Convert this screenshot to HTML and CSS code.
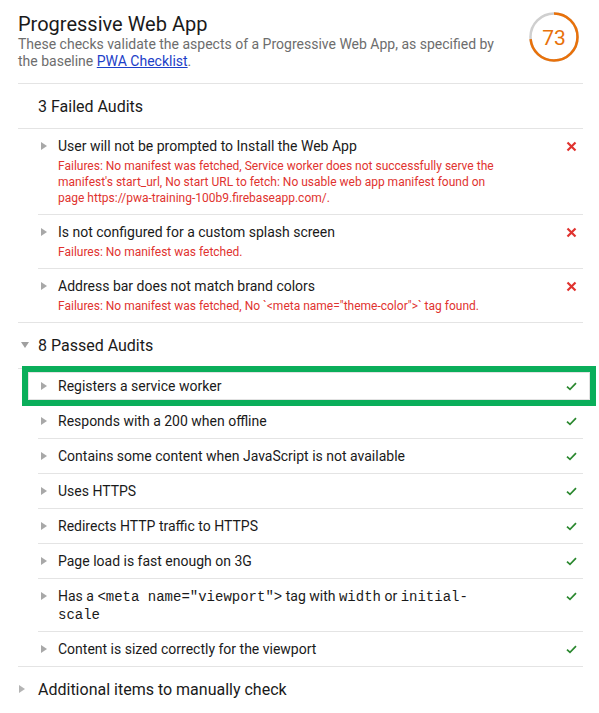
FILE: index.html
```html
<!DOCTYPE html>
<html>
<head>
<meta charset="utf-8">
<link rel="stylesheet" href="styles.css">
</head>
<body>
<div class="report">
  <header class="cat-header">
    <div class="cat-text">
      <h1 class="cat-title">Progressive Web App</h1>
      <p class="cat-desc">These checks validate the aspects of a Progressive Web App, as specified by the baseline <a href="#" class="link">PWA Checklist</a>.</p>
    </div>
    <div class="gauge">
      <svg width="54" height="54" viewBox="0 0 54 54">
        <circle cx="27" cy="27" r="23.5" fill="none" stroke="#cfcfcf" stroke-width="2.5"/>
        <circle cx="27" cy="27" r="23.5" fill="none" stroke="#e8710a" stroke-width="2.5" stroke-dasharray="107.8 200" transform="rotate(-90 27 27)"/>
        <text x="27" y="34.5" text-anchor="middle" class="gauge-num">73</text>
      </svg>
    </div>
  </header>

  <section class="group">
    <div class="group-header"><span class="arrow-slot"></span><span>3 Failed Audits</span></div>
    <div class="rows">
      <div class="row">
        <span class="arrow-slot"><span class="tri-right"></span></span>
        <div class="row-text">
          <div class="row-title">User will not be prompted to Install the Web App</div>
          <div class="row-desc">Failures: No manifest was fetched, Service worker does not successfully serve the manifest's start_url, No start URL to fetch: No usable web app manifest found on page https://pwa-training-100b9.firebaseapp.com/.</div>
        </div>
        <span class="icon"><svg width="11" height="11" viewBox="0 0 11 11"><path d="M1.5 1.5L9.5 9.5M9.5 1.5L1.5 9.5" stroke="#e0332f" stroke-width="2.2" fill="none"/></svg></span>
      </div>
      <div class="row">
        <span class="arrow-slot"><span class="tri-right"></span></span>
        <div class="row-text">
          <div class="row-title">Is not configured for a custom splash screen</div>
          <div class="row-desc">Failures: No manifest was fetched.</div>
        </div>
        <span class="icon"><svg width="11" height="11" viewBox="0 0 11 11"><path d="M1.5 1.5L9.5 9.5M9.5 1.5L1.5 9.5" stroke="#e0332f" stroke-width="2.2" fill="none"/></svg></span>
      </div>
      <div class="row">
        <span class="arrow-slot"><span class="tri-right"></span></span>
        <div class="row-text">
          <div class="row-title">Address bar does not match brand colors</div>
          <div class="row-desc">Failures: No manifest was fetched, No `&lt;meta name="theme-color"&gt;` tag found.</div>
        </div>
        <span class="icon"><svg width="11" height="11" viewBox="0 0 11 11"><path d="M1.5 1.5L9.5 9.5M9.5 1.5L1.5 9.5" stroke="#e0332f" stroke-width="2.2" fill="none"/></svg></span>
      </div>
    </div>
  </section>

  <section class="group">
    <div class="group-header tall"><span class="arrow-slot"><span class="tri-down"></span></span><span>8 Passed Audits</span></div>
    <div class="rows">
      <div class="row highlight">
        <span class="arrow-slot"><span class="tri-right"></span></span>
        <div class="row-text"><div class="row-title">Registers a service worker</div></div>
        <span class="icon"><svg width="11" height="9" viewBox="0 0 11 9"><path d="M1 4.6L4 7.4L10 1.2" stroke="#2b882f" stroke-width="1.7" fill="none"/></svg></span>
      </div>
      <div class="row">
        <span class="arrow-slot"><span class="tri-right"></span></span>
        <div class="row-text"><div class="row-title">Responds with a 200 when offline</div></div>
        <span class="icon"><svg width="11" height="9" viewBox="0 0 11 9"><path d="M1 4.6L4 7.4L10 1.2" stroke="#2b882f" stroke-width="1.7" fill="none"/></svg></span>
      </div>
      <div class="row">
        <span class="arrow-slot"><span class="tri-right"></span></span>
        <div class="row-text"><div class="row-title">Contains some content when JavaScript is not available</div></div>
        <span class="icon"><svg width="11" height="9" viewBox="0 0 11 9"><path d="M1 4.6L4 7.4L10 1.2" stroke="#2b882f" stroke-width="1.7" fill="none"/></svg></span>
      </div>
      <div class="row">
        <span class="arrow-slot"><span class="tri-right"></span></span>
        <div class="row-text"><div class="row-title">Uses HTTPS</div></div>
        <span class="icon"><svg width="11" height="9" viewBox="0 0 11 9"><path d="M1 4.6L4 7.4L10 1.2" stroke="#2b882f" stroke-width="1.7" fill="none"/></svg></span>
      </div>
      <div class="row">
        <span class="arrow-slot"><span class="tri-right"></span></span>
        <div class="row-text"><div class="row-title">Redirects HTTP traffic to HTTPS</div></div>
        <span class="icon"><svg width="11" height="9" viewBox="0 0 11 9"><path d="M1 4.6L4 7.4L10 1.2" stroke="#2b882f" stroke-width="1.7" fill="none"/></svg></span>
      </div>
      <div class="row">
        <span class="arrow-slot"><span class="tri-right"></span></span>
        <div class="row-text"><div class="row-title">Page load is fast enough on 3G</div></div>
        <span class="icon"><svg width="11" height="9" viewBox="0 0 11 9"><path d="M1 4.6L4 7.4L10 1.2" stroke="#2b882f" stroke-width="1.7" fill="none"/></svg></span>
      </div>
      <div class="row">
        <span class="arrow-slot"><span class="tri-right"></span></span>
        <div class="row-text"><div class="row-title">Has a <code>&lt;meta name="viewport"&gt;</code> tag with <code>width</code> or <code>initial-scale</code></div></div>
        <span class="icon"><svg width="11" height="9" viewBox="0 0 11 9"><path d="M1 4.6L4 7.4L10 1.2" stroke="#2b882f" stroke-width="1.7" fill="none"/></svg></span>
      </div>
      <div class="row">
        <span class="arrow-slot"><span class="tri-right"></span></span>
        <div class="row-text"><div class="row-title">Content is sized correctly for the viewport</div></div>
        <span class="icon"><svg width="11" height="9" viewBox="0 0 11 9"><path d="M1 4.6L4 7.4L10 1.2" stroke="#2b882f" stroke-width="1.7" fill="none"/></svg></span>
      </div>
    </div>
  </section>

  <section class="group last">
    <div class="group-header"><span class="arrow-slot"><span class="tri-right big"></span></span><span>Additional items to manually check</span></div>
  </section>
</div>
</body>
</html>
```
FILE: styles.css
```css
html, body {
  margin: 0;
  padding: 0;
  background: #ffffff;
}
body {
  font-family: Roboto, "Liberation Sans", Arial, sans-serif;
  color: #212121;
}
.report {
  padding: 0 16px 0 18px;
}
.cat-header {
  display: flex;
  align-items: flex-start;
  justify-content: space-between;
  padding: 12px 0 13px 0;
  border-bottom: 1px solid #e4e4e4;
}
.cat-text {
  flex: 0 0 487px;
}
.cat-title {
  margin: 0;
  font-size: 20px;
  line-height: 24px;
  font-weight: 400;
  color: #1a1a1a;
}
.cat-desc {
  margin: 0;
  font-size: 14px;
  line-height: 17px;
  color: #6d6d6d;
}
.link {
  color: #1c40c8;
  text-decoration: underline;
}
.gauge {
  margin-top: -2px;
  margin-right: 2px;
  width: 54px;
  height: 54px;
}
.gauge svg {
  display: block;
}
.gauge-num {
  font-family: Roboto, "Liberation Sans", sans-serif;
  font-size: 21px;
  fill: #e8710a;
}
.group {
  border-bottom: 1px solid #e4e4e4;
}
.group.last {
  border-bottom: none;
}
.group-header {
  display: flex;
  align-items: center;
  height: 44px;
  font-size: 16px;
  color: #1a1a1a;
  border-bottom: 1px solid #e4e4e4;
}
.group-header.tall {
  height: 45px;
  padding-bottom: 1px;
  box-sizing: border-box;
  height: 46px;
}
.group.last .group-header {
  border-bottom: none;
}
.arrow-slot {
  display: flex;
  align-items: center;
  width: 20px;
  flex: none;
  align-self: stretch;
}
.rows {
  margin-left: 20px;
}
.row {
  display: flex;
  align-items: flex-start;
  padding: 8px 0;
  border-bottom: 1px solid #e4e4e4;
}
.row:last-child {
  border-bottom: none;
}
.row .arrow-slot {
  height: 18px;
  align-self: flex-start;
}
.row-text {
  width: 445px;
}
.row-title {
  font-size: 14px;
  line-height: 18px;
  color: #1a1a1a;
}
.row-title code {
  font-family: "Liberation Mono", "Courier New", monospace;
  font-size: 14px;
  line-height: 1;
  font-weight: 400;
  color: #1a1a1a;
}
.row-desc {
  margin: 3px 0 0 0;
  font-size: 12px;
  line-height: 16px;
  color: #df332f;
}
.icon {
  margin-left: auto;
  margin-right: 6px;
  height: 18px;
  display: flex;
  align-items: center;
}
.icon svg {
  display: block;
}
.tri-right {
  display: block;
  width: 0;
  height: 0;
  margin-left: 3px;
  border-top: 4px solid transparent;
  border-bottom: 4px solid transparent;
  border-left: 6px solid #a8a8a8;
}
.tri-right.big {
  margin-left: 1px;
  border-top-width: 4.5px;
  border-bottom-width: 4.5px;
  border-left-width: 6px;
  border-left-color: #b4b4b4;
}
.tri-down {
  display: block;
  width: 0;
  height: 0;
  margin-left: 3px;
  border-left: 4px solid transparent;
  border-right: 4px solid transparent;
  border-top: 6px solid #a0a0a0;
}
.highlight {
  position: relative;
}
.highlight::after {
  content: "";
  position: absolute;
  top: -3px;
  bottom: -3px;
  left: -16px;
  right: -13px;
  border: 6px solid #0aae5a;
  box-shadow: inset 0 0 0 1px #e2e2e2;
  pointer-events: none;
}
```
